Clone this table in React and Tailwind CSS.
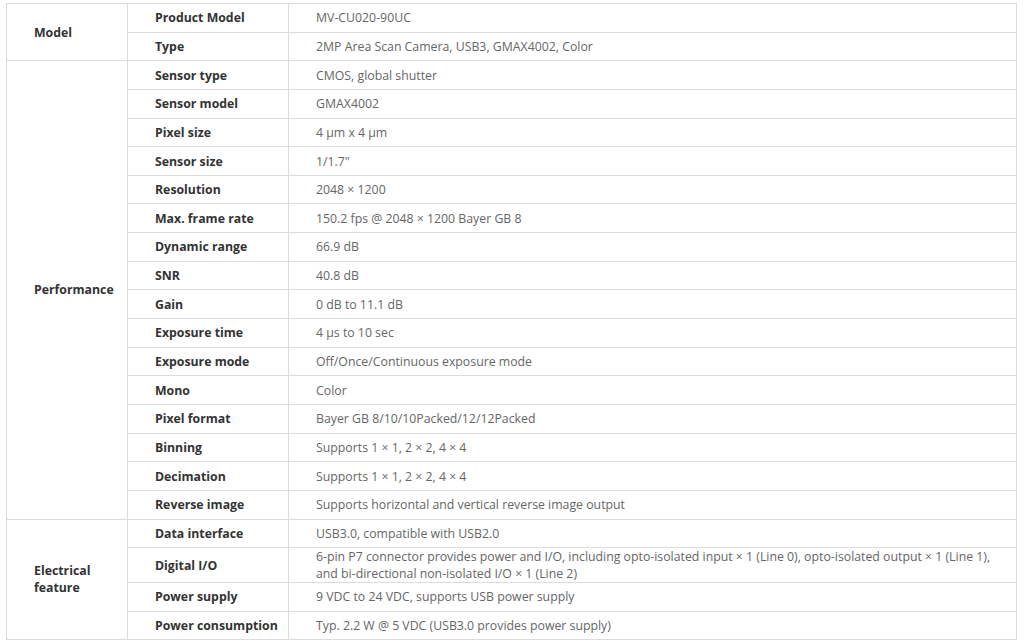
import React from 'react'

const groups = [
  {
    name: 'Model',
    rows: [
      ['Product Model', 'MV-CU020-90UC'],
      ['Type', '2MP Area Scan Camera, USB3, GMAX4002, Color'],
    ],
  },
  {
    name: 'Performance',
    rows: [
      ['Sensor type', 'CMOS, global shutter'],
      ['Sensor model', 'GMAX4002'],
      ['Pixel size', '4 μm x 4 μm'],
      ['Sensor size', '1/1.7"'],
      ['Resolution', '2048 × 1200'],
      ['Max. frame rate', '150.2 fps @ 2048 × 1200 Bayer GB 8'],
      ['Dynamic range', '66.9 dB'],
      ['SNR', '40.8 dB'],
      ['Gain', '0 dB to 11.1 dB'],
      ['Exposure time', '4 μs to 10 sec'],
      ['Exposure mode', 'Off/Once/Continuous exposure mode'],
      ['Mono', 'Color'],
      ['Pixel format', 'Bayer GB 8/10/10Packed/12/12Packed'],
      ['Binning', 'Supports 1 × 1, 2 × 2, 4 × 4'],
      ['Decimation', 'Supports 1 × 1, 2 × 2, 4 × 4'],
      ['Reverse image', 'Supports horizontal and vertical reverse image output'],
    ],
  },
  {
    name: 'Electrical feature',
    rows: [
      ['Data interface', 'USB3.0, compatible with USB2.0'],
      [
        'Digital I/O',
        '6-pin P7 connector provides power and I/O, including opto-isolated input × 1 (Line 0), opto-isolated output × 1 (Line 1), and bi-directional non-isolated I/O × 1 (Line 2)',
        true,
      ],
      ['Power supply', '9 VDC to 24 VDC, supports USB power supply'],
      ['Power consumption', 'Typ. 2.2 W @ 5 VDC (USB3.0 provides power supply)'],
    ],
  },
]

export default function App() {
  return (
    <div className="min-h-screen bg-white pt-[3px] pl-[6px]" style={{ fontFamily: '"Open Sans", "Noto Sans", sans-serif' }}>
      <table className="w-[1011px] border-collapse text-[12.3px] leading-[17px]">
        <colgroup>
          <col className="w-[121px]" />
          <col className="w-[161px]" />
          <col />
        </colgroup>
        <tbody>
          {groups.map((g) =>
            g.rows.map(([label, value, tall], i) => (
              <tr key={g.name + label} className={tall ? 'h-[35px]' : 'h-[28.65px]'}>
                {i === 0 && (
                  <td
                    rowSpan={g.rows.length}
                    className="border border-[#dcdcdc] pl-[27px] pr-2 align-middle font-bold text-[#333]"
                  >
                    {g.name === 'Electrical feature' ? (
                      <>
                        Electrical
                        <br />
                        feature
                      </>
                    ) : (
                      g.name
                    )}
                  </td>
                )}
                <td className="border border-[#dcdcdc] pl-[27px] font-bold text-[#333] align-middle">{label}</td>
                <td className="border border-[#dcdcdc] pl-[27px] pr-4 text-[#666] align-middle">{value}</td>
              </tr>
            ))
          )}
        </tbody>
      </table>
    </div>
  )
}
